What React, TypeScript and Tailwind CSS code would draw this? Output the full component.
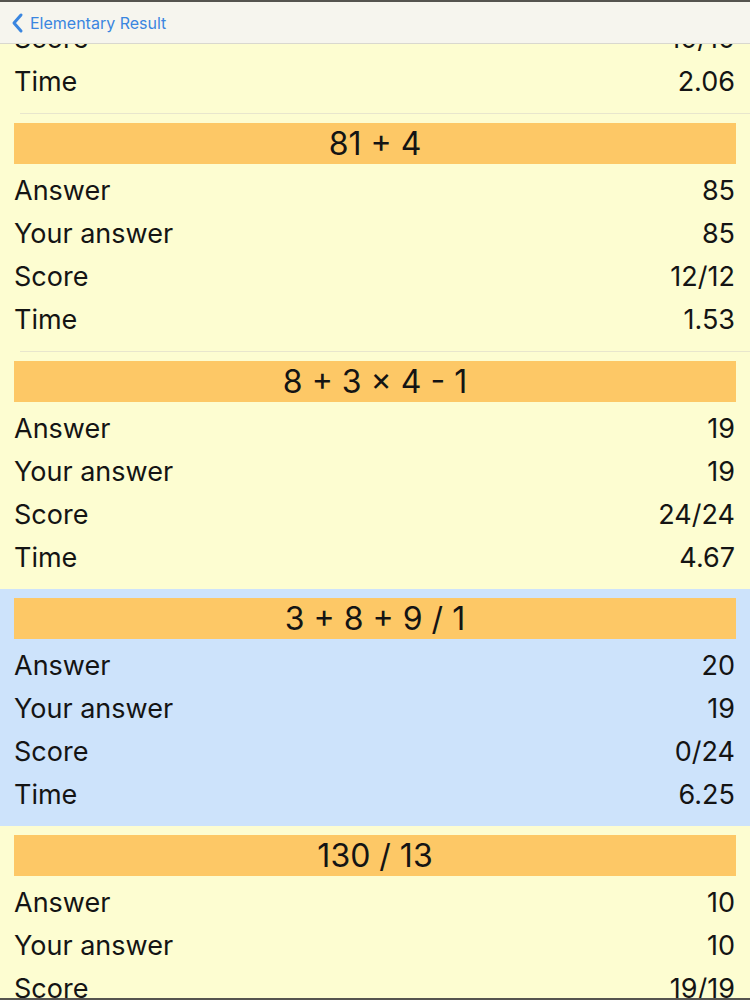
import React from "react";

type Item = {
  question: string;
  answer: string;
  yours: string;
  score: string;
  time: string;
  selected?: boolean;
};

const items: Item[] = [
  { question: "5 × 2", answer: "10", yours: "10", score: "10/10", time: "2.06" },
  { question: "81 + 4", answer: "85", yours: "85", score: "12/12", time: "1.53" },
  { question: "8 + 3 × 4 - 1", answer: "19", yours: "19", score: "24/24", time: "4.67" },
  { question: "3 + 8 + 9 / 1", answer: "20", yours: "19", score: "0/24", time: "6.25", selected: true },
  { question: "130 / 13", answer: "10", yours: "10", score: "19/19", time: "2.11" },
];

const Row = ({ label, value }: { label: string; value: string }) => (
  <div className="flex h-[43px] items-center justify-between pl-[14px] pr-[15px]">
    <span>{label}</span>
    <span>{value}</span>
  </div>
);

const ResultCell = ({ item, last }: { item: Item; last: boolean }) => (
  <div className={item.selected ? "bg-[#cde3fb]" : "bg-[#fdfdd1]"}>
    <div className="flex h-[237px] flex-col pt-[9px]">
      <div className="mx-[14px] flex h-[41px] items-center justify-center bg-[#fdc866] text-[32px]">
        {item.question}
      </div>
      <div className="mt-[6px]">
        <Row label="Answer" value={item.answer} />
        <Row label="Your answer" value={item.yours} />
        <Row label="Score" value={item.score} />
        <Row label="Time" value={item.time} />
      </div>
    </div>
    {!last && !item.selected && <div className="ml-[20px] h-px bg-[#e8e6cd]" />}
  </div>
);

export default function App() {
  return (
    <div
      className="relative h-[1000px] w-[750px] overflow-hidden bg-[#fdfdd1] text-[27px] text-[#141414]"
      style={{ fontFamily: "Inter, 'Liberation Sans', sans-serif" }}
    >
      <div className="mt-[-124px]">
        {items.map((item, i) => (
          <ResultCell key={i} item={item} last={i === items.length - 1 || items[i + 1]?.selected === true} />
        ))}
      </div>

      {/* navigation bar */}
      <div className="absolute left-0 right-0 top-0 flex h-[44px] items-center border-t-2 border-b border-t-[#55544f] border-b-[#d9d8cf] bg-[#f6f5ee] pl-[10px]">
        <svg width="16" height="22" viewBox="0 0 16 22" className="mr-[4px]">
          <path d="M11 3 L4 11 L11 19" fill="none" stroke="#3a86e0" strokeWidth="3" strokeLinecap="round" strokeLinejoin="round" />
        </svg>
        <span className="text-[16px] text-[#3a86e0]">Elementary Result</span>
      </div>

      <div className="absolute bottom-0 left-0 right-0 h-[2px] bg-[#55544f]" />
    </div>
  );
}
